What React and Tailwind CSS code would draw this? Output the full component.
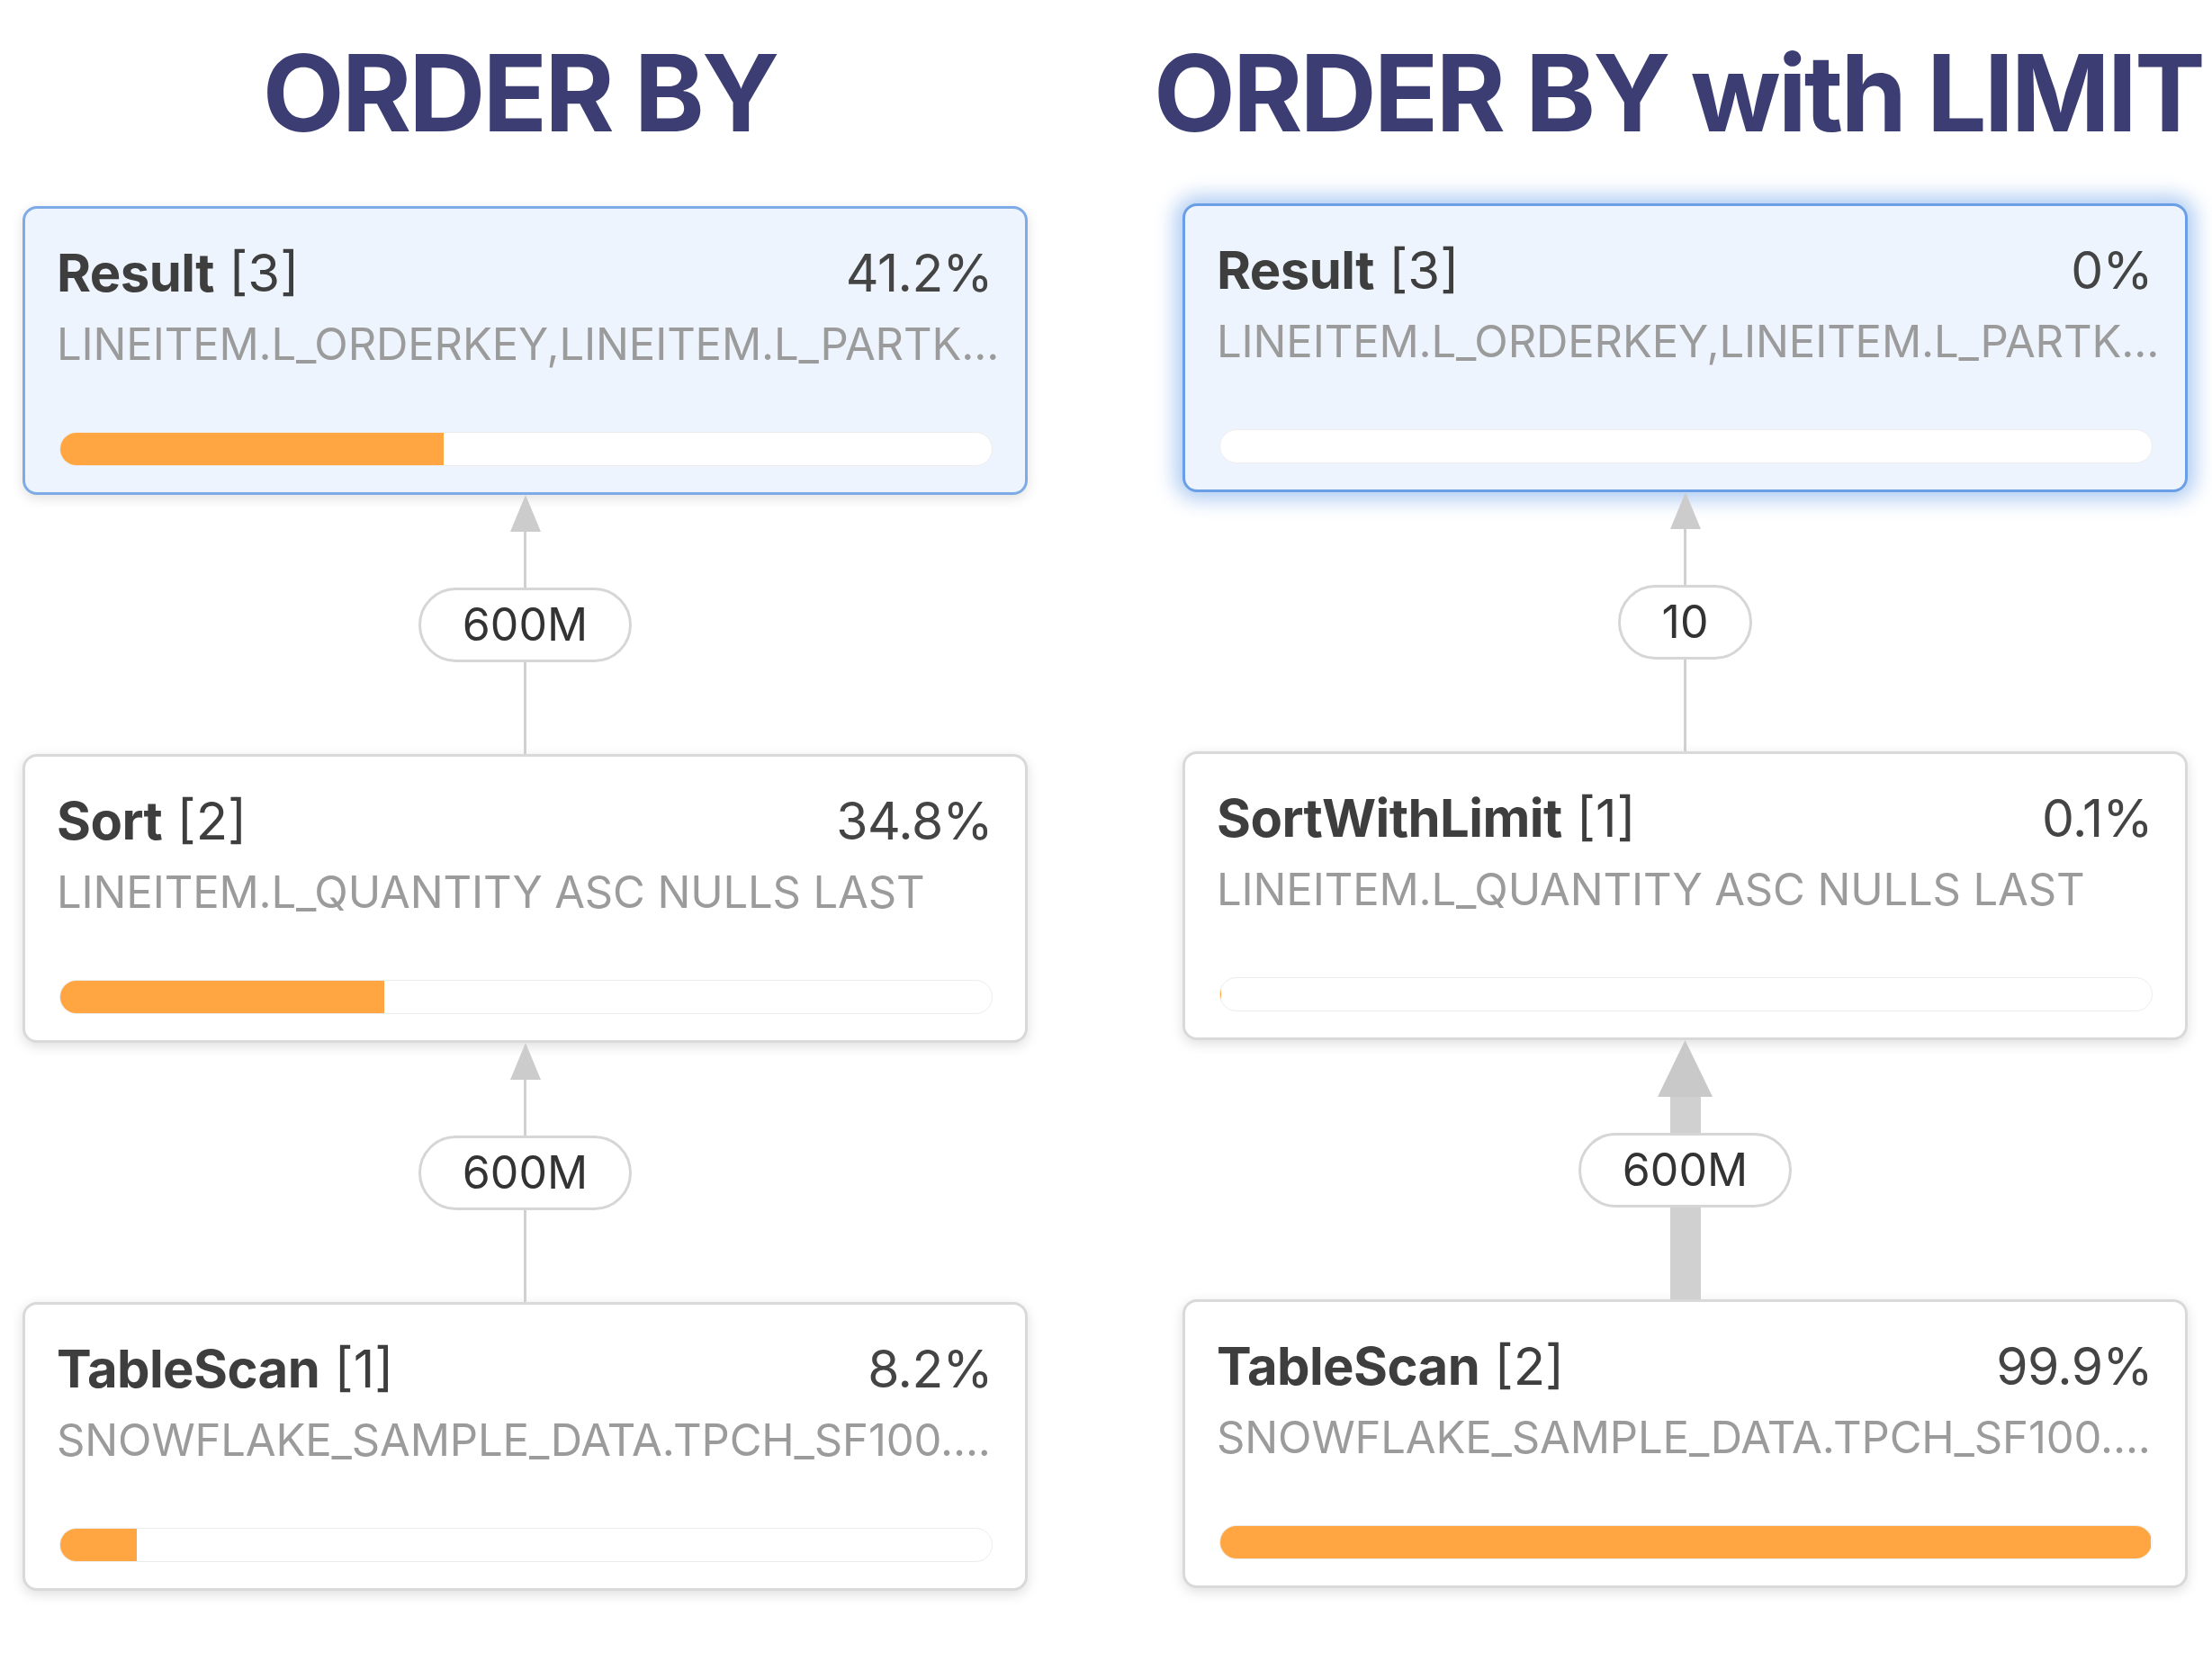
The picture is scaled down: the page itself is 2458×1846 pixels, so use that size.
import { Fragment } from "react";

const plans = [
  {
    title: "ORDER BY",
    nodes: [
      { name: "Result", id: 3, pct: 41.2, label: "41.2%", detail: "LINEITEM.L_ORDERKEY,LINEITEM.L_PARTK...", result: true },
      { name: "Sort", id: 2, pct: 34.8, label: "34.8%", detail: "LINEITEM.L_QUANTITY ASC NULLS LAST" },
      { name: "TableScan", id: 1, pct: 8.2, label: "8.2%", detail: "SNOWFLAKE_SAMPLE_DATA.TPCH_SF100...." },
    ],
    edges: [
      { rows: "600M", thick: false },
      { rows: "600M", thick: false },
    ],
  },
  {
    title: "ORDER BY with LIMIT",
    glow: true,
    nodes: [
      { name: "Result", id: 3, pct: 0, label: "0%", detail: "LINEITEM.L_ORDERKEY,LINEITEM.L_PARTK...", result: true },
      { name: "SortWithLimit", id: 1, pct: 0.1, label: "0.1%", detail: "LINEITEM.L_QUANTITY ASC NULLS LAST" },
      { name: "TableScan", id: 2, pct: 99.9, label: "99.9%", detail: "SNOWFLAKE_SAMPLE_DATA.TPCH_SF100...." },
    ],
    edges: [
      { rows: "10", thick: false },
      { rows: "600M", thick: true },
    ],
  },
];

function NodeCard({ node, glow }) {
  const cardStyle = node.result
    ? glow
      ? "border-[#6a9fe6] bg-[#edf4fd] shadow-[0_0_22px_8px_rgba(86,146,228,0.48)]"
      : "border-[#7eaae6] bg-[#edf4fd] shadow-[0_4px_14px_rgba(0,0,0,0.12)]"
    : "border-[#d9d9d9] bg-white shadow-[0_4px_14px_rgba(0,0,0,0.13)]";

  return (
    <div className={`h-[321px] rounded-[16px] border-[3px] pl-[35px] pr-[36px] pt-[37px] ${cardStyle}`}>
      <div className="flex h-[68px] items-baseline justify-between leading-[68px] text-[#3e3e3e]">
        <p className="text-[58px]">
          <span className="font-bold tracking-[-0.01em]">{node.name}</span>{" "}
          <span>[{node.id}]</span>
        </p>
        <p className="text-[57px] tracking-[-0.01em] text-[#444]">{node.label}</p>
      </div>
      <p className="mt-[16px] h-[60px] whitespace-nowrap text-[49px] leading-[60px] tracking-[-0.003em] text-[#9b9b9b]">
        {node.detail}
      </p>
      <div className="ml-[3px] mt-[67px] h-[38px] overflow-hidden rounded-full border border-[#ededed] bg-white">
        <div className="h-full bg-[#ffa541]" style={{ width: `${node.pct}%` }} />
      </div>
    </div>
  );
}

function Edge({ edge }) {
  const lineW = edge.thick ? "w-[34px]" : "w-[3px]";
  return (
    <div className="flex h-[288px] flex-col items-center">
      <div className="flex flex-1 flex-col items-center">
        {edge.thick ? (
          <svg width="61" height="63" viewBox="0 0 61 63" className="block">
            <polygon points="30.5,0 61,63 0,63" fill="#c9c9c9" />
          </svg>
        ) : (
          <svg width="34" height="41" viewBox="0 0 34 41" className="block">
            <polygon points="17,0 34,41 0,41" fill="#cccccc" />
          </svg>
        )}
        <div className={`flex-1 bg-[#d0d0d0] ${lineW}`} />
      </div>
      <div className="flex h-[83px] items-center rounded-full border-[3px] border-[#d6d6d6] bg-white px-[46px] text-[50px] text-[#333]">
        {edge.rows}
      </div>
      <div className={`flex-1 bg-[#d0d0d0] ${lineW}`} />
    </div>
  );
}

export default function App() {
  return (
    <div
      className="flex h-[1846px] w-[2458px] gap-[172px] overflow-hidden bg-white pl-[25px] pt-[44px]"
      style={{ fontFamily: "Inter, 'Noto Sans', sans-serif" }}
    >
      {plans.map((plan, i) => (
        <div key={plan.title} className="flex w-[1117px] flex-col">
          <h1
            className={`h-[118px] whitespace-nowrap text-center text-[118px] font-bold leading-[118px] tracking-[-0.025em] text-[#3c3e73] ${
              i === 1 ? "-ml-[32px] -mr-[16px]" : "-ml-[12px]"
            }`}
          >
            {plan.title}
          </h1>
          <div className={i === 1 ? "mt-[64px]" : "mt-[67px]"}>
            {plan.nodes.map((node, j) => (
              <Fragment key={node.name}>
                <NodeCard node={node} glow={plan.glow} />
                {plan.edges[j] && <Edge edge={plan.edges[j]} />}
              </Fragment>
            ))}
          </div>
        </div>
      ))}
    </div>
  );
}
